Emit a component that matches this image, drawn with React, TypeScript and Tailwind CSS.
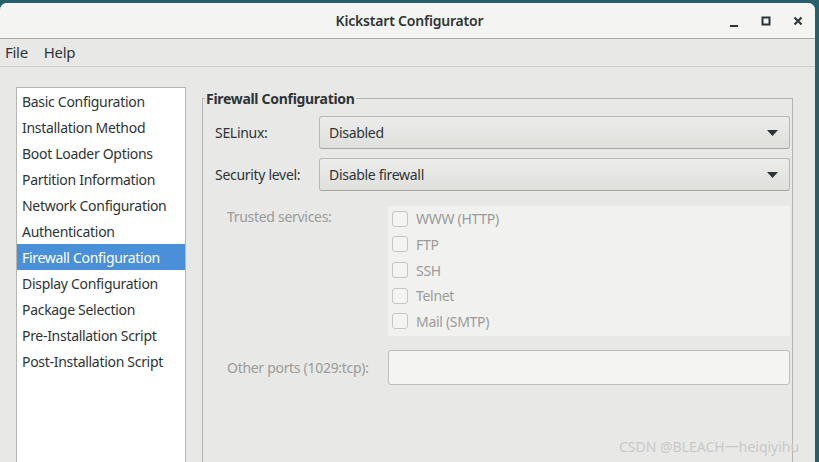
import { useState } from "react";

const SECTIONS = [
  "Basic Configuration",
  "Installation Method",
  "Boot Loader Options",
  "Partition Information",
  "Network Configuration",
  "Authentication",
  "Firewall Configuration",
  "Display Configuration",
  "Package Selection",
  "Pre-Installation Script",
  "Post-Installation Script",
];

const SERVICES = ["WWW (HTTP)", "FTP", "SSH", "Telnet", "Mail (SMTP)"];

function Combo({ value }: { value: string }) {
  return (
    <div className="flex-1 h-[33px] flex items-center justify-between pl-[9px] pr-[11px] rounded-[3px] border border-[#b8b8b5] border-b-[#a5a5a2] bg-gradient-to-b from-[#ececea] to-[#dfdfdc] text-[#2e3436]">
      <span>{value}</span>
      <svg width="11" height="6" viewBox="0 0 11 6" className="mt-[1px]">
        <path d="M0 0h11L5.5 6z" fill="#2e3436" />
      </svg>
    </div>
  );
}

export default function App() {
  const [active, setActive] = useState("Firewall Configuration");

  return (
    <div
      className="relative w-[819px] h-[462px] overflow-hidden bg-[#25606c] pt-[3px] pr-[4px] text-[14px] tracking-[-0.3px] text-[#2e3436]"
      style={{ fontFamily: '"Noto Sans", "DejaVu Sans", sans-serif' }}
    >
      <div className="h-full flex flex-col rounded-t-[7px] overflow-hidden bg-[#e8e8e7]">
        {/* Title bar */}
        <div className="h-[36px] shrink-0 relative flex items-center justify-center bg-[#f4f4f3] border-b border-[#a9a9a7]">
          <span className="font-semibold text-[14px] tracking-[-0.2px] text-[#2e3436] pl-[4px]">Kickstart Configurator</span>
          <div className="absolute right-[12px] top-0 h-full flex items-center gap-[22px]">
            <svg width="10" height="10" viewBox="0 0 10 10" className="mt-[2px]">
              <rect x="1" y="8" width="8" height="2" fill="#2e3436" />
            </svg>
            <svg width="10" height="10" viewBox="0 0 10 10">
              <rect x="1.5" y="1.5" width="7" height="7" fill="none" stroke="#2e3436" strokeWidth="2" />
            </svg>
            <svg width="10" height="10" viewBox="0 0 10 10">
              <path d="M1.5 1.5l7 7M8.5 1.5l-7 7" stroke="#2e3436" strokeWidth="2" />
            </svg>
          </div>
        </div>

        {/* Menu bar */}
        <div className="h-[28px] shrink-0 flex items-center gap-[16px] px-[5px] border-b border-[#cfcfcd] text-[15px]">
          <span>File</span>
          <span>Help</span>
        </div>

        {/* Body */}
        <div className="flex-1 flex pl-[16px] pt-[20px] gap-[16px] min-h-0">
          {/* Section list */}
          <div className="w-[170px] shrink-0 bg-white border border-[#b6b6b3] border-b-0">
            {SECTIONS.map((s) => (
              <div
                key={s}
                onClick={() => setActive(s)}
                className={`h-[26px] flex items-center pl-[5px] whitespace-nowrap ${
                  active === s ? "bg-[#4a90d9] text-white" : "text-[#2e3436]"
                }`}
              >
                {s}
              </div>
            ))}
          </div>

          {/* Firewall frame */}
          <div className="w-[591px] shrink-0 relative pt-[11px]">
            <div className="h-full border border-[#b3b3b0] border-b-0 pt-[17px] pl-[12px] pr-[2px]">
              <div className="flex flex-col gap-[9px]">
                <div className="flex items-center">
                  <span className="w-[104px] shrink-0">SELinux:</span>
                  <Combo value="Disabled" />
                </div>
                <div className="flex items-center">
                  <span className="w-[104px] shrink-0">Security level:</span>
                  <Combo value="Disable firewall" />
                </div>
              </div>

              <div className="flex mt-[15px] pl-[12px] text-[#9b9b99]">
                <span className="w-[161px] shrink-0">Trusted services:</span>
                <div className="flex-1 bg-[#f1f1f0] h-[130px] flex flex-col pb-[2px] justify-center">
                  {SERVICES.map((s) => (
                    <label key={s} className="h-[26px] flex items-center pl-[4px] gap-[8px]">
                      <span className="w-[16px] h-[16px] rounded-[3px] border border-[#c6c6c4] bg-[#f4f4f3]" />
                      <span>{s}</span>
                    </label>
                  ))}
                </div>
              </div>

              <div className="flex items-center mt-[14px] pl-[12px] text-[#9b9b99]">
                <span className="w-[161px] shrink-0">Other ports (1029:tcp):</span>
                <div className="flex-1 h-[35px] rounded-[3px] border border-[#bdbdbb] bg-[#f4f4f3]" />
              </div>
            </div>
            <span className="absolute left-[3px] top-[1px] px-[1px] bg-[#e8e8e7] font-bold">Firewall Configuration</span>
          </div>
        </div>
      </div>

      {/* Watermark */}
      <span className="absolute left-[619px] top-[436px] text-[14px] tracking-normal text-[#c9c9c7]">
        CSDN @BLEACH一heiqiyihu
      </span>
    </div>
  );
}
